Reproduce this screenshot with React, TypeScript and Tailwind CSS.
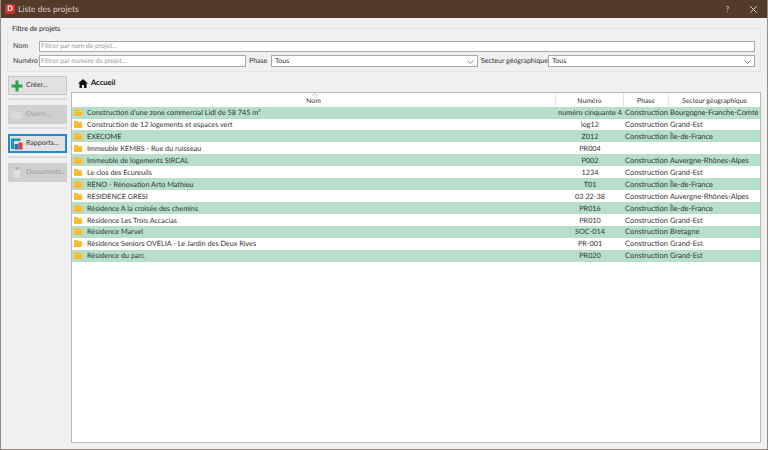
const rows = [
  ["Construction d'une zone commercial Lidl de 58 745 m²", "numéro cinquante 4", "Construction", "Bourgogne-Franche-Comté"],
  ["Construction de 12 logements et espaces vert", "log12", "Construction", "Grand-Est"],
  ["EXECOME", "Z012", "Construction", "Île-de-France"],
  ["Immeuble KEMBS - Rue du ruisseau", "PR004", "", ""],
  ["Immeuble de logements SIRCAL", "P002", "Construction", "Auvergne-Rhônes-Alpes"],
  ["Le clos des Ecureuils", "1234", "Construction", "Grand-Est"],
  ["RENO - Rénovation Arto Mathieu", "T01", "Construction", "Île-de-France"],
  ["RESIDENCE GRESI", "03 22-38", "Construction", "Auvergne-Rhônes-Alpes"],
  ["Résidence A la croisée des chemins", "PR016", "Construction", "Île-de-France"],
  ["Résidence Les Trois Accacias", "PR010", "Construction", "Grand-Est"],
  ["Résidence Marvel", "SOC-014", "Construction", "Bretagne"],
  ["Résidence Seniors OVELIA - Le Jardin des Deux Rives", "PR-001", "Construction", "Grand-Est"],
  ["Résidence du parc", "PR020", "Construction", "Grand-Est"],
];

const Chevron = () => (
  <svg width="7" height="4" viewBox="0 0 7 4" className="absolute right-[3px] top-[4px]" fill="none" stroke="#666" strokeWidth="0.8">
    <path d="M0.5 0.5 L3.5 3.5 L6.5 0.5" />
  </svg>
);

const Folder = () => (
  <svg width="8" height="7" viewBox="0 0 9 8" preserveAspectRatio="none" className="shrink-0">
    <path d="M0 1 Q0 0 1 0 H3.4 L4.4 1 H8 Q9 1 9 2 V7 Q9 8 8 8 H1 Q0 8 0 7 Z" fill="#fbb92e" />
    <path d="M0 2.4 H9 V3 H0 Z" fill="#fdd877" />
  </svg>
);

const Select = ({ className }: { className: string }) => (
  <div className={`relative h-[12px] bg-white border border-[#a8a8a8] pl-[3px] leading-[10px] ${className}`}>
    Tous
    <Chevron />
  </div>
);

const Sep = () => <div className="h-[2px] bg-[#dcdcdc] w-[59px]" />;

export default function App() {
  return (
    <div className="w-[768px] h-[450px] flex flex-col bg-[#f0f0f0] text-[#333] text-[7px] overflow-hidden border-x border-b border-[#9c8a7c] [text-rendering:geometricPrecision]" style={{ fontFamily: 'Lato, sans-serif' }}>
      {/* Title bar */}
      <div className="h-[18px] shrink-0 -mx-px bg-[#543a29] flex items-center pl-[5px] text-[#d8d0ca]">
        <div className="w-[10px] h-[10px] bg-[#d2302a] rounded-[1px] text-white font-bold text-[7.5px] leading-[10px] text-center">D</div>
        <span className="ml-[3px] text-[8.5px]">Liste des projets</span>
        <span className="ml-auto mr-[21px] text-[8px]">?</span>
        <svg width="7" height="7" viewBox="0 0 7 7" className="mr-[11px]" stroke="#e8e2dc" strokeWidth="1">
          <path d="M0.5 0.5 L6.5 6.5 M6.5 0.5 L0.5 6.5" />
        </svg>
      </div>

      {/* Filters */}
      <div className="mx-[6px] mt-[10px] h-[44px] shrink-0 border border-[#e4e4e4] rounded-[2px] pl-[5px] flex flex-col">
        <div className="-mt-[5px] -ml-px h-[11px] w-fit bg-[#f0f0f0] pr-[1px] leading-[11px] text-[#222] whitespace-nowrap">Filtre de projets</div>
        <div className="flex items-center h-[11px] mt-[6px]">
          <span className="w-[26px]">Nom</span>
          <div className="w-[716px] h-[11px] bg-white border border-[#a8a8a8] pl-[1px] leading-[9px] text-[6.7px] text-[#999]">Filtrer par nom de projet...</div>
        </div>
        <div className="flex items-center h-[12px] mt-[3px] whitespace-nowrap">
          <span className="w-[26px]">Numéro</span>
          <div className="w-[207px] h-[12px] bg-white border border-[#a8a8a8] pl-[1px] leading-[10px] text-[6.7px] text-[#999]">Filtrer par numéro de projet...</div>
          <span className="w-[25px] pl-[3px]">Phase</span>
          <Select className="w-[207px]" />
          <span className="w-[70px] pl-[3px]">Secteur géographique</span>
          <Select className="w-[207px]" />
        </div>
      </div>

      {/* Main */}
      <div className="flex flex-1 mt-[4px] pl-[7px] pr-[6px] pb-[6px]">
        <div className="w-[63px] shrink-0 flex flex-col">
          <div className="w-[59px] h-[19px] bg-[#e1e1e1] border border-[#c8c8c8] flex items-center pl-[2px] gap-[3px]">
            <svg width="12" height="12" viewBox="0 0 12 12" className="shrink-0">
              <path d="M4.5 0.5 H7.5 V4.5 H11.5 V7.5 H7.5 V11.5 H4.5 V7.5 H0.5 V4.5 H4.5 Z" fill="#27a34d" />
            </svg>
            <span>Créer...</span>
          </div>
          <div className="mt-[3px] mb-[5px]"><Sep /></div>
          <div className="w-[59px] h-[19px] bg-[#cfcfcf] flex items-center pl-[3px] gap-[4px] text-[#9a9a9a]">
            <svg width="11" height="9" viewBox="0 0 11 9" className="shrink-0">
              <path d="M0 1 H4 L5 2 H11 V9 H0 Z" fill="#dadada" />
            </svg>
            <span>Ouvrir...</span>
          </div>
          <div className="mt-[3px] mb-[5px]"><Sep /></div>
          <div className="w-[59px] h-[19px] bg-[#e1e1e1] border-2 border-[#1f88d8] flex items-center pl-[1px] gap-[3px]">
            <svg width="12" height="12" viewBox="0 0 12 12" className="shrink-0">
              <path d="M0 0.5 H9.5 V3 H3 V11 H0 Z" fill="#1e9aa8" />
              <rect x="3.5" y="6" width="4" height="5.5" fill="#2f6ec0" />
              <rect x="7.5" y="4.5" width="4" height="7" fill="#d8433b" />
            </svg>
            <span>Rapports...</span>
          </div>
          <div className="mt-[3px] mb-[5px]"><Sep /></div>
          <div className="w-[59px] h-[19px] bg-[#cfcfcf] flex items-center pl-[5px] gap-[5px] text-[#9a9a9a]">
            <svg width="8" height="11" viewBox="0 0 8 11" className="shrink-0">
              <path d="M1 3 H7 V11 H1 Z" fill="#dedede" />
              <path d="M2.5 0 H5.5 V2.5 H2.5 Z" fill="#b0b0b0" />
            </svg>
            <span className="whitespace-nowrap">Documents...</span>
          </div>
        </div>

        <div className="flex-1 flex flex-col min-w-0">
          <div className="h-[16px] shrink-0 flex items-center pb-[2px] pl-[7px] gap-[3px] font-bold text-[7.5px] text-[#111]">
            <svg width="10" height="9" viewBox="0 0 10 9" className="shrink-0">
              <path d="M5 0 L10 4.6 H8.5 V9 H6 V6 H4 V9 H1.5 V4.6 H0 Z" fill="#111" />
            </svg>
            <span>Accueil</span>
          </div>
          <div className="flex-1 bg-white border border-[#b4bcb8]">
            <div className="relative flex h-[13.6px] text-center leading-[17px] text-[6.8px]">
              <svg width="5" height="3" viewBox="0 0 5 3" className="absolute left-[240px] top-0" fill="none" stroke="#888" strokeWidth="0.6">
                <path d="M0.3 2.7 L2.5 0.4 L4.7 2.7" />
              </svg>
              <div className="w-[484px] border-r border-[#e4e4e4]">Nom</div>
              <div className="w-[68px] border-r border-[#e4e4e4]">Numéro</div>
              <div className="w-[45px] border-r border-[#e4e4e4]">Phase</div>
              <div className="w-[91px]">Secteur géographique</div>
            </div>
            {rows.map((r, i) => (
              <div key={r[0]} className={`flex h-[11.95px] items-center leading-[12px] ${i % 2 === 0 ? "bg-[#b5dfcb]" : "bg-white"}`}>
                <div className="w-[484px] flex items-center pl-[2px] gap-[5px] text-[7.25px]">
                  <Folder />
                  <span className="whitespace-nowrap pt-[1px]">{r[0]}</span>
                </div>
                <div className="w-[68px] text-center whitespace-nowrap pt-[1px] text-[7.25px]">{r[1]}</div>
                <div className="w-[45px] text-center whitespace-nowrap pt-[1px] text-[7.5px]">{r[2]}</div>
                <div className="w-[91px] pl-[1px] whitespace-nowrap pt-[1px] text-[7.4px]">{r[3]}</div>
              </div>
            ))}
          </div>
        </div>
      </div>
    </div>
  );
}
